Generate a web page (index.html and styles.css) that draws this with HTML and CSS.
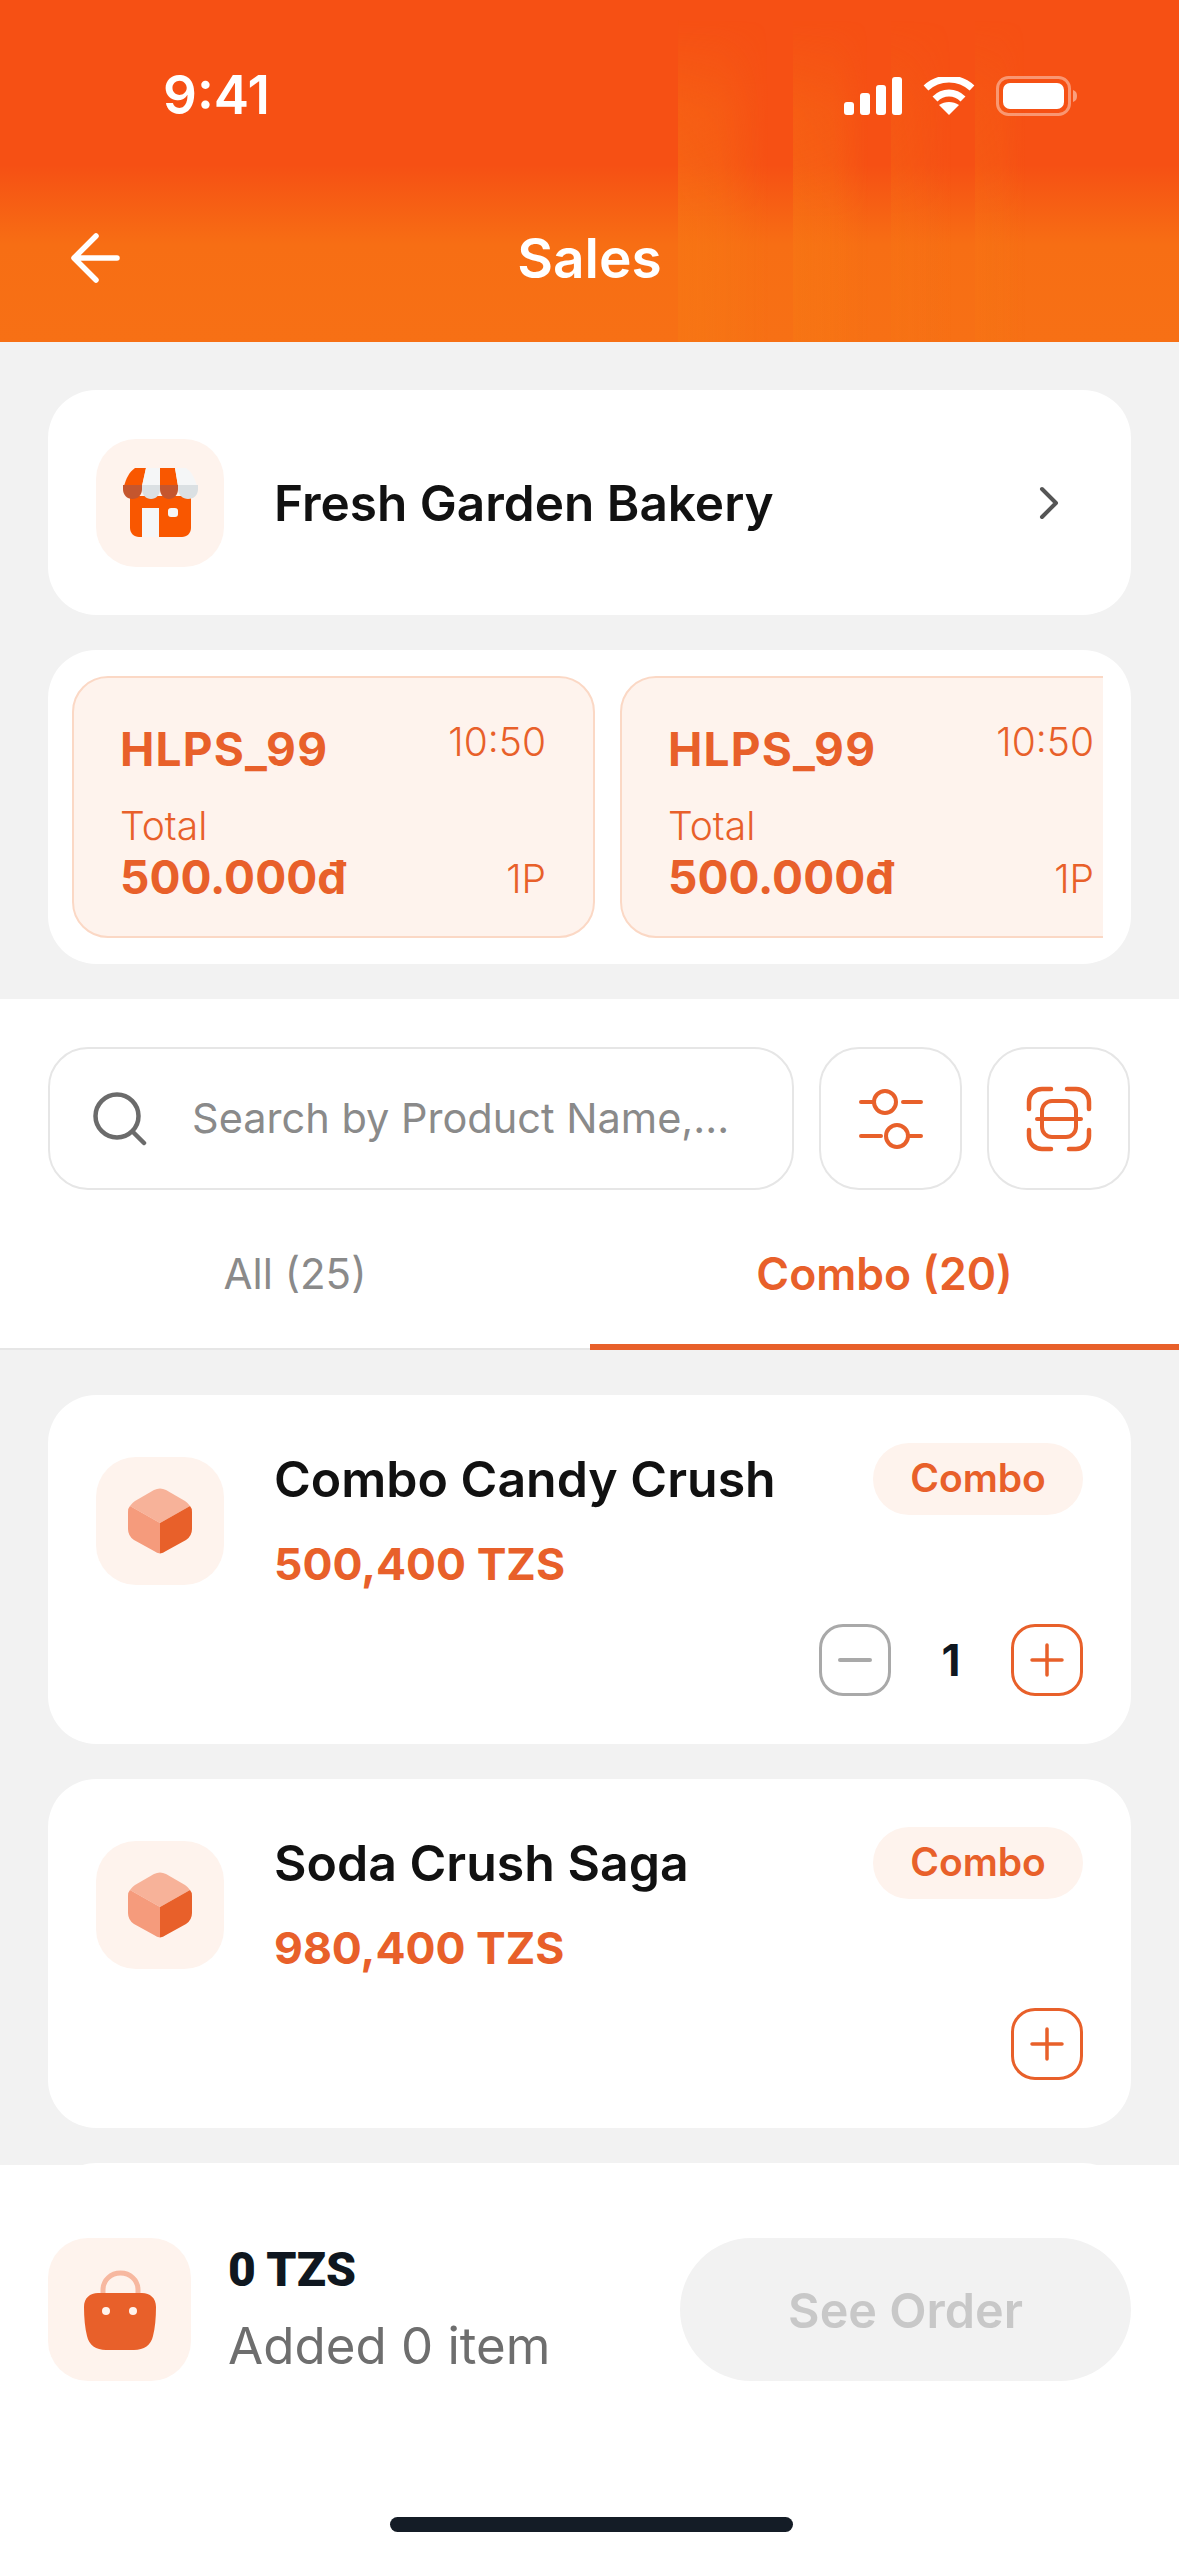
FILE: index.html
```html
<!DOCTYPE html>
<html lang="en">
<head>
    <meta charset="UTF-8">
    <meta name="viewport" content="width=device-width, initial-scale=1.0">
    <title>Sales</title>
    <link rel="stylesheet" href="styles.css">
</head>
<body>
    <div class="page">
        <header class="header">
            <div class="status-bar">
                <span class="clock">9:41</span>
                <div class="status-icons">
                    <svg width="58" height="38" viewBox="0 0 58 38"><rect x="0" y="25" width="10" height="13" rx="3" fill="#fff"/><rect x="16" y="16" width="10" height="22" rx="3" fill="#fff"/><rect x="32" y="8" width="10" height="30" rx="3" fill="#fff"/><rect x="48" y="0" width="10" height="38" rx="3" fill="#fff"/></svg>
                    <svg width="52" height="38" viewBox="0 0 52 38"><path d="M3 11C16-1 36-1 49 11" fill="none" stroke="#fff" stroke-width="7"/><path d="M12 22C20 14 32 14 40 22" fill="none" stroke="#fff" stroke-width="7"/><path d="M26 38L16 28C22 24 30 24 36 28Z" fill="#fff"/></svg>
                    <svg width="82" height="40" viewBox="0 0 82 40"><rect x="1.5" y="1.5" width="72" height="37" rx="11" fill="none" stroke="#fff" stroke-opacity=".4" stroke-width="3"/><rect x="7" y="7" width="61" height="26" rx="7" fill="#fff"/><path d="M77 14C80 15 81 17 81 20C81 23 80 25 77 26Z" fill="#fff" fill-opacity=".45"/></svg>
                </div>
            </div>
            <div class="nav-bar">
                <svg width="49" height="50" viewBox="0 0 49 50"><path d="M25 3L3 25L25 47M4 25H46" fill="none" stroke="#fff" stroke-width="5.5" stroke-linecap="round" stroke-linejoin="round"/></svg>
                <h1>Sales</h1>
            </div>
        </header>

        <main class="content">
            <div class="top-area">
                <div class="card store-card">
                    <div class="icon-box">
                        <svg width="75" height="69" viewBox="0 0 75 69">
                            <path d="M7 28H68V60C68 65 64 69 59 69H16C11 69 7 65 7 60Z" fill="#f95700"/>
                            <rect x="19" y="40" width="17" height="29" fill="#f5f6f7"/>
                            <rect x="45" y="40" width="10" height="9" rx="3" fill="#f5f6f7"/>
                            <path d="M12 0H23L19 18H1C3 11 6 4 12 0Z" fill="#f95700"/>
                            <path d="M23 0H37V18H19Z" fill="#f5f6f7"/>
                            <path d="M37 0H52L55 18H37Z" fill="#f95700"/>
                            <path d="M52 0H63C69 4 72 11 74 18H55Z" fill="#f5f6f7"/>
                            <path d="M0 17H19V21C19 27 15 31 9.5 31C4 31 0 27 0 21Z" fill="#c4562e"/>
                            <path d="M19 17H37V21C37 27 33 31 28 31C23 31 19 27 19 21Z" fill="#dbe0e3"/>
                            <path d="M37 17H55V21C55 27 51 31 46 31C41 31 37 27 37 21Z" fill="#c4562e"/>
                            <path d="M55 17H75V21C75 27 71 31 65 31C60 31 55 27 55 21Z" fill="#dbe0e3"/>
                        </svg>
                    </div>
                    <div class="store-name">Fresh Garden Bakery</div>
                    <svg width="22" height="34" viewBox="0 0 22 34"><path d="M4 3L18 17L4 31" fill="none" stroke="#555" stroke-width="4" stroke-linecap="round" stroke-linejoin="round"/></svg>
                </div>

                <div class="card orders-card">
                    <div class="orders-scroll">
                        <div class="order-tile">
                            <div class="order-row">
                                <span class="order-code">HLPS_99</span>
                                <span class="order-meta order-time">10:50</span>
                            </div>
                            <div class="order-label">Total</div>
                            <div class="order-row order-bottom">
                                <span class="order-total">500.000đ</span>
                                <span class="order-meta">1P</span>
                            </div>
                        </div>
                        <div class="order-tile">
                            <div class="order-row">
                                <span class="order-code">HLPS_99</span>
                                <span class="order-meta order-time">10:50</span>
                            </div>
                            <div class="order-label">Total</div>
                            <div class="order-row order-bottom">
                                <span class="order-total">500.000đ</span>
                                <span class="order-meta">1P</span>
                            </div>
                        </div>
                    </div>
                </div>
            </div>

            <section class="search-section">
                <div class="search-row">
                    <div class="search-box">
                        <svg width="54" height="54" viewBox="0 0 54 54"><circle cx="24" cy="24" r="21.5" fill="none" stroke="#6b6b6b" stroke-width="4.5"/><path d="M40 40L51 51" stroke="#6b6b6b" stroke-width="4.5" stroke-linecap="round"/></svg>
                        <span class="search-text">Search by Product Name,...</span>
                    </div>
                    <div class="square-btn">
                        <svg width="64" height="60" viewBox="0 0 64 60"><circle cx="26" cy="13" r="11" fill="none" stroke="#e8602a" stroke-width="4"/><circle cx="38" cy="47" r="11" fill="none" stroke="#e8602a" stroke-width="4"/><path d="M2 13H14M44 13H62M2 47H22M50 47H62" stroke="#e8602a" stroke-width="4" stroke-linecap="round"/></svg>
                    </div>
                    <div class="square-btn">
                        <svg width="66" height="66" viewBox="0 0 66 66"><path d="M3 23V16C3 8 9 3 16 3H25M41 3H50C57 3 63 8 63 16V23M63 44V50C63 58 57 63 50 63H43M25 63H16C9 63 3 58 3 50V44" fill="none" stroke="#e8602a" stroke-width="4.5" stroke-linecap="round"/><rect x="16" y="15" width="34" height="36" rx="10" fill="none" stroke="#e8602a" stroke-width="4"/><path d="M11 33H55" stroke="#e8602a" stroke-width="4" stroke-linecap="round"/></svg>
                    </div>
                </div>
                <div class="tabs">
                    <div class="tab">All (25)</div>
                    <div class="tab tab-active">Combo (20)</div>
                </div>
            </section>

            <section class="product-list">
                <div class="card product-card">
                    <div class="icon-box">
                        <svg width="64" height="66" viewBox="0 0 64 66"><path d="M26 2Q32-1 38 2L57 13Q60 15 62 18L32 35L2 18Q4 15 7 13Z" fill="#f7b299"/><path d="M2 18L32 35V65.5Q29 65 26 63L6 52Q0 48 0 41V24Q0 20 2 18Z" fill="#f59b7c"/><path d="M62 18L32 35V65.5Q35 65 38 63L58 52Q64 48 64 41V24Q64 20 62 18Z" fill="#e8602a"/></svg>
                    </div>
                    <div class="product-info">
                        <div class="product-name">Combo Candy Crush</div>
                        <div class="product-price">500,400 TZS</div>
                    </div>
                    <span class="badge">Combo</span>
                    <div class="qty">
                        <div class="qty-btn qty-minus"><svg width="34" height="4" viewBox="0 0 34 4"><rect width="34" height="4" rx="2" fill="#a9a9a9"/></svg></div>
                        <span class="qty-num">1</span>
                        <div class="qty-btn qty-plus"><svg width="34" height="34" viewBox="0 0 34 34"><path d="M2 17H32M17 2V32" stroke="#e8602a" stroke-width="3.5" stroke-linecap="round"/></svg></div>
                    </div>
                </div>
                <div class="card product-card">
                    <div class="icon-box">
                        <svg width="64" height="66" viewBox="0 0 64 66"><path d="M26 2Q32-1 38 2L57 13Q60 15 62 18L32 35L2 18Q4 15 7 13Z" fill="#f7b299"/><path d="M2 18L32 35V65.5Q29 65 26 63L6 52Q0 48 0 41V24Q0 20 2 18Z" fill="#f59b7c"/><path d="M62 18L32 35V65.5Q35 65 38 63L58 52Q64 48 64 41V24Q64 20 62 18Z" fill="#e8602a"/></svg>
                    </div>
                    <div class="product-info">
                        <div class="product-name">Soda Crush Saga</div>
                        <div class="product-price">980,400 TZS</div>
                    </div>
                    <span class="badge">Combo</span>
                    <div class="qty">
                        <div class="qty-btn qty-plus"><svg width="34" height="34" viewBox="0 0 34 34"><path d="M2 17H32M17 2V32" stroke="#e8602a" stroke-width="3.5" stroke-linecap="round"/></svg></div>
                    </div>
                </div>
                <div class="card product-card"></div>
            </section>
        </main>

        <footer class="footer">
            <div class="footer-row">
                <div class="bag-box">
                    <svg width="72" height="80" viewBox="0 0 72 80"><path d="M19 26V20C19 10 27 3 36.5 3C46 3 54 10 54 20V26" fill="none" stroke="#f7b8a0" stroke-width="5"/><path d="M14 23H58C66 23 72 28 72 37C72 48 71 58 69 66C67 75 60 80 50 80H22C12 80 5 75 3 66C1 58 0 48 0 37C0 28 6 23 14 23Z" fill="#e8602a"/><circle cx="22" cy="41" r="4" fill="#fff3ed"/><circle cx="49" cy="41" r="4" fill="#fff3ed"/></svg>
                </div>
                <div class="cart-info">
                    <div class="cart-total">0 TZS</div>
                    <div class="cart-count">Added 0 item</div>
                </div>
                <div class="see-order">See Order</div>
            </div>
            <div class="home-bar"></div>
        </footer>
    </div>
</body>
</html>
```

FILE: styles.css
```css
* {
    box-sizing: border-box;
}
html, body {
    margin: 0;
    padding: 0;
}
body {
    font-family: Inter, "Liberation Sans", sans-serif;
    background-color: #f2f2f2;
}
.page {
    width: 1179px;
    height: 2556px;
    display: flex;
    flex-direction: column;
    overflow: hidden;
}
.header {
    position: relative;
    height: 342px;
    flex-shrink: 0;
    color: white;
    background: linear-gradient(180deg, #f65014 0, #f65014 165px, #f76e14 245px, #f77015 100%);
}
/* soft vertical streaks in the header artwork */
.header::before {
    content: "";
    position: absolute;
    top: 0;
    right: 0;
    bottom: 0;
    left: 678px;
    background:
        linear-gradient(90deg, rgba(247,122,20,.5) 0, rgba(247,122,20,.4) 40px, transparent 90px) 0 0 / 110px 100% no-repeat,
        linear-gradient(90deg, rgba(247,122,20,.45) 0, rgba(247,122,20,.35) 40px, transparent 75px) 115px 0 / 90px 100% no-repeat,
        linear-gradient(90deg, rgba(247,122,20,.25) 0, rgba(247,122,20,.18) 20px, transparent 60px) 213px 0 / 70px 100% no-repeat,
        linear-gradient(90deg, rgba(247,122,20,.25) 0, rgba(247,122,20,.18) 25px, transparent 50px) 297px 0 / 60px 100% no-repeat;
    -webkit-mask-image: linear-gradient(180deg, transparent 20px, rgba(0,0,0,.7) 110px, black 220px);
    mask-image: linear-gradient(180deg, transparent 20px, rgba(0,0,0,.7) 110px, black 220px);
}
.status-bar {
    position: relative;
    height: 121px;
    padding: 70px 101px 0 163px;
    display: flex;
    justify-content: space-between;
}
.clock {
    font-size: 53px;
    line-height: 50px;
    height: 50px;
    font-weight: 600;
}
.status-icons {
    display: flex;
    align-items: center;
    gap: 21px;
    height: 40px;
    margin-top: 6px;
}
.nav-bar {
    position: relative;
    margin-top: 87px;
    padding: 0 71px;
    height: 100px;
    display: grid;
    grid-template-columns: 1fr auto 1fr;
    align-items: center;
}
h1 {
    margin: 0;
    font-size: 55px;
    line-height: 60px;
    font-weight: 600;
}
.content {
    flex: 1;
    min-height: 0;
    overflow: hidden;
}
.top-area {
    padding: 48px 48px 35px;
    display: flex;
    flex-direction: column;
    gap: 35px;
}
.card {
    background-color: white;
    border-radius: 48px;
}
.icon-box {
    width: 128px;
    height: 128px;
    border-radius: 40px;
    background-color: #fef3ed;
    display: flex;
    align-items: center;
    justify-content: center;
    flex-shrink: 0;
}
.store-card {
    height: 225px;
    padding: 0 71px 0 48px;
    display: flex;
    align-items: center;
}
.store-name {
    flex: 1;
    margin-left: 50px;
    font-size: 49.5px;
    font-weight: 600;
    color: #111;
}
.orders-card {
    height: 314px;
    padding: 26px 28px 24px 24px;
}
.orders-scroll {
    display: flex;
    gap: 25px;
    overflow: hidden;
    height: 262px;
}
.order-tile {
    width: 523px;
    height: 262px;
    flex-shrink: 0;
    padding: 44px 47px 0 46px;
    background-color: #fef3ed;
    border: 2px solid #fbd8c5;
    border-radius: 36px;
    color: #e8602a;
}
.order-row {
    display: flex;
    justify-content: space-between;
}
.order-code {
    font-size: 46px;
    line-height: 54px;
    font-weight: 700;
    letter-spacing: 1.2px;
}
.order-meta {
    font-size: 39px;
    line-height: 46px;
    font-weight: 300;
}
.order-time {
    margin-top: -3px;
}
.order-label {
    margin-top: 29px;
    font-size: 39px;
    line-height: 42px;
    font-weight: 300;
}
.order-bottom {
    align-items: flex-end;
    margin-top: 5px;
}
.order-total {
    font-size: 46px;
    line-height: 50px;
    font-weight: 700;
}
.search-section {
    background-color: white;
    height: 351px;
    padding-top: 48px;
}
.search-row {
    display: flex;
    gap: 25px;
    padding: 0 48px;
}
.search-box {
    width: 746px;
    height: 143px;
    border: 2px solid #e6e6e6;
    border-radius: 40px;
    display: flex;
    align-items: center;
    padding-left: 43px;
    gap: 45px;
}
.search-text {
    margin-top: -2px;
    font-size: 41.5px;
    color: #8a8a8a;
}
.square-btn {
    width: 143px;
    height: 143px;
    border: 2px solid #e6e6e6;
    border-radius: 40px;
    display: flex;
    align-items: center;
    justify-content: center;
}
.tabs {
    display: flex;
    height: 160px;
    border-bottom: 2px solid #e6e6e6;
}
.tab {
    width: 590px;
    padding-top: 50px;
    text-align: center;
    font-size: 42px;
    line-height: 68px;
    color: #8a8a8a;
}
.tab-active {
    flex: 1;
    height: 160px;
    border-bottom: 6px solid #e8602a;
    font-size: 44.5px;
    color: #e8602a;
    font-weight: 600;
}
.product-list {
    padding: 45px 48px 0;
    display: flex;
    flex-direction: column;
    gap: 35px;
}
.product-card {
    position: relative;
    height: 349px;
    flex-shrink: 0;
    padding: 62px 48px 0;
    display: flex;
    align-items: flex-start;
}
.product-info {
    margin-left: 50px;
}
.product-name {
    margin-top: -10px;
    font-size: 50px;
    line-height: 64px;
    font-weight: 600;
    color: #111;
}
.product-price {
    margin-top: 23px;
    font-size: 44.5px;
    line-height: 60px;
    font-weight: 700;
    color: #e8602a;
}
.badge {
    position: absolute;
    top: 48px;
    right: 48px;
    width: 210px;
    height: 72px;
    border-radius: 36px;
    background-color: #fef3ed;
    color: #e8602a;
    font-size: 39px;
    line-height: 70px;
    font-weight: 600;
    text-align: center;
}
.qty {
    position: absolute;
    right: 48px;
    bottom: 48px;
    display: flex;
    align-items: center;
}
.qty-btn {
    width: 72px;
    height: 72px;
    border-radius: 24px;
    border: 3px solid #e8602a;
    display: flex;
    align-items: center;
    justify-content: center;
}
.qty-minus {
    border-color: #a9a9a9;
}
.qty-num {
    width: 120px;
    text-align: center;
    font-size: 44px;
    font-weight: 700;
    color: #0f1720;
}
.footer {
    height: 391px;
    flex-shrink: 0;
    background-color: white;
    position: relative;
    padding: 73px 48px 0;
}
.footer-row {
    display: flex;
    align-items: center;
}
.bag-box {
    width: 143px;
    height: 143px;
    border-radius: 40px;
    background-color: #fef3ed;
    display: flex;
    align-items: center;
    justify-content: center;
    flex-shrink: 0;
}
.cart-info {
    flex: 1;
    margin-left: 37px;
}
.cart-total {
    margin-top: -4px;
    font-family: Roboto, Inter, sans-serif;
    font-size: 48px;
    line-height: 56px;
    font-weight: 900;
    color: #0f1720;
}
.cart-count {
    margin-top: 20px;
    font-size: 51px;
    line-height: 56px;
    color: #6e6e6e;
}
.see-order {
    width: 451px;
    height: 143px;
    border-radius: 72px;
    background-color: #f2f2f2;
    color: #c8c8c8;
    font-size: 48.5px;
    line-height: 145px;
    font-weight: 600;
    text-align: center;
}
.home-bar {
    position: absolute;
    left: 390px;
    bottom: 24px;
    width: 403px;
    height: 15px;
    border-radius: 8px;
    background-color: #141c26;
}
```
